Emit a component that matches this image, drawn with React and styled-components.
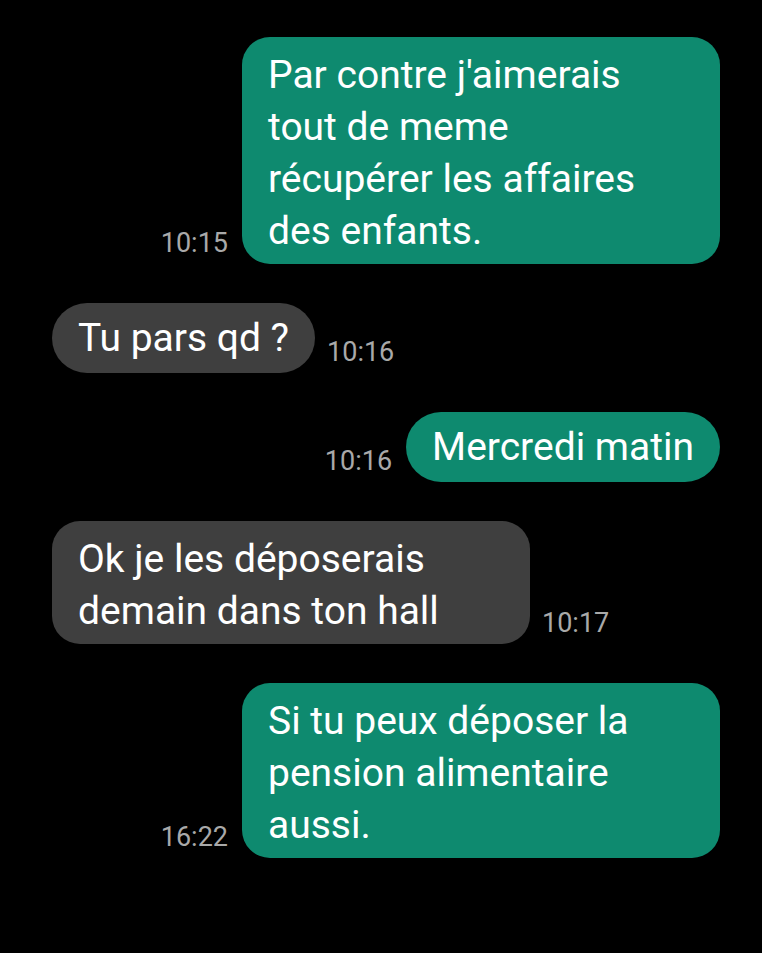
import React from 'react'
import styled, { createGlobalStyle } from 'styled-components';

const GlobalStyle = createGlobalStyle`
  html, body {
    margin: 0;
    padding: 0;
    background: #000;
  }
`;

const Thread = styled.div`
  width: 762px;
  min-height: 953px;
  box-sizing: border-box;
  padding: 37px 42px 0 52px;
  display: flex;
  flex-direction: column;
  gap: 39px;
  background: #000;
  font-family: Roboto, "Noto Sans", sans-serif;
`;

const Row = styled.div`
  display: flex;
  align-items: flex-end;
  justify-content: ${p => (p.$out ? 'flex-end' : 'flex-start')};
  gap: ${p => (p.$out ? '14px' : '12px')};
`;

const Bubble = styled.div`
  box-sizing: border-box;
  width: ${p => (p.$wide ? '478px' : 'auto')};
  padding: ${p => (p.$wide ? '12px 26px 7px' : '9px 26px')};
  border-radius: ${p => (p.$wide ? '28px' : '36px')};
  background: ${p => (p.$out ? '#0e8a6f' : '#3f3f3f')};
  color: #fff;
  font-size: 39px;
  line-height: 52px;
`;

const Time = styled.span`
  color: #a9a9a9;
  font-size: 27px;
  line-height: 27px;
  margin-bottom: 7px;
`;

const messages = [
  { out: true, time: '10:15', wide: true, lines: ["Par contre j'aimerais", 'tout de meme', 'récupérer les affaires', 'des enfants.'] },
  { out: false, time: '10:16', lines: ['Tu pars qd ?'] },
  { out: true, time: '10:16', lines: ['Mercredi matin'] },
  { out: false, time: '10:17', wide: true, lines: ['Ok je les déposerais', 'demain dans ton hall'] },
  { out: true, time: '16:22', wide: true, lines: ['Si tu peux déposer la', 'pension alimentaire', 'aussi.'] },
];

const Message = ({ msg }) => {
  const bubble = (
    <Bubble $out={msg.out} $wide={msg.wide}>
      {msg.lines.map((l, i) => <div key={i}>{l}</div>)}
    </Bubble>
  );
  const time = <Time>{msg.time}</Time>;
  return (
    <Row $out={msg.out}>
      {msg.out ? time : bubble}
      {msg.out ? bubble : time}
    </Row>
  );
};

export default function App() {
  return (
    <>
      <GlobalStyle />
      <Thread>
        {messages.map((m, i) => <Message msg={m} key={i} />)}
      </Thread>
    </>
  );
}
